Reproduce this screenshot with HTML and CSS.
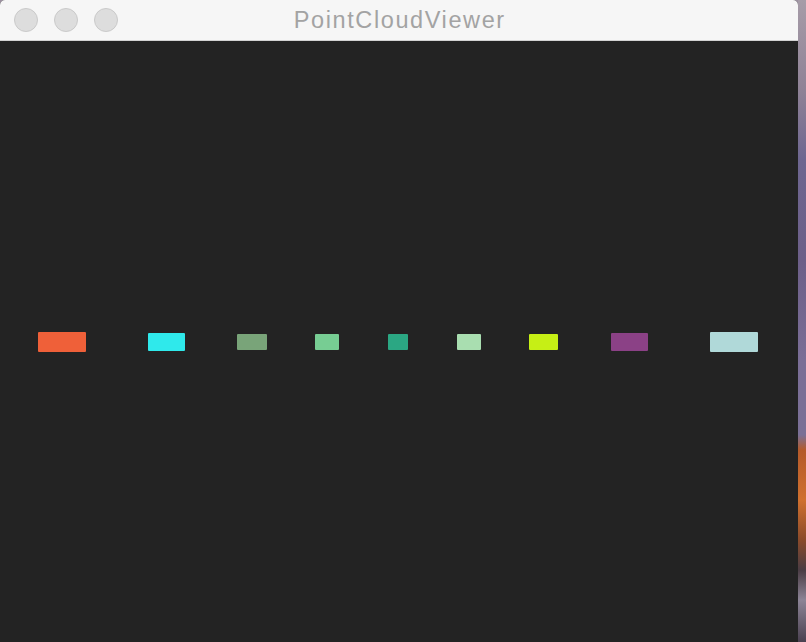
FILE: index.html
```html
<!DOCTYPE html>
<html>
<head>
<meta charset="utf-8">
<title>PointCloudViewer</title>
<link rel="stylesheet" href="styles.css">
</head>
<body>
<div class="screen">
  <div class="window">
    <div class="titlebar">
      <div class="lights">
        <span class="light"></span>
        <span class="light"></span>
        <span class="light"></span>
      </div>
      <div class="title">PointCloudViewer</div>
    </div>
    <div class="canvas">
      <div class="pt" style="left:38px;top:291px;width:48px;height:20px;background:#ef6039"></div>
      <div class="pt" style="left:148px;top:292px;width:37px;height:18px;background:#2fe9eb"></div>
      <div class="pt" style="left:237px;top:293px;width:30px;height:16px;background:#79a479"></div>
      <div class="pt" style="left:315px;top:293px;width:24px;height:16px;background:#77cd93"></div>
      <div class="pt" style="left:388px;top:293px;width:20px;height:16px;background:#2ba783"></div>
      <div class="pt" style="left:457px;top:293px;width:24px;height:16px;background:#a9deb0"></div>
      <div class="pt" style="left:529px;top:293px;width:29px;height:16px;background:#c6ef15"></div>
      <div class="pt" style="left:611px;top:292px;width:37px;height:18px;background:#8b4186"></div>
      <div class="pt" style="left:710px;top:291px;width:48px;height:20px;background:#b0d9d9"></div>
    </div>
  </div>
  <div class="desktop"></div>
</div>
</body>
</html>
```
FILE: styles.css
```css
html, body {
  margin: 0;
  padding: 0;
  width: 806px;
  height: 642px;
  overflow: hidden;
}
body {
  background: #9c90a0;
  font-family: "Liberation Sans", Arial, sans-serif;
}
.screen {
  display: flex;
  width: 806px;
  height: 642px;
}
.window {
  width: 798px;
  height: 642px;
  display: flex;
  flex-direction: column;
  border-radius: 5px 5px 0 0;
  overflow: hidden;
  background: #232323;
}
.titlebar {
  height: 40px;
  flex: none;
  background: #f6f6f6;
  border-bottom: 1px solid #d2d2d2;
  position: relative;
  display: flex;
  align-items: center;
}
.lights {
  display: flex;
  gap: 16px;
  padding-left: 14px;
}
.light {
  width: 22px;
  height: 22px;
  border-radius: 50%;
  background: #dddddd;
  border: 1px solid #cacaca;
}
.title {
  position: absolute;
  left: 0;
  right: 0;
  top: 0;
  height: 40px;
  line-height: 41px;
  text-align: center;
  font-size: 23.5px;
  letter-spacing: 1.6px;
  text-indent: 1.6px;
  color: #a3a3a3;
}
.canvas {
  flex: 1;
  position: relative;
  background: #232323;
}
.pt {
  position: absolute;
  border-radius: 1px;
}
.desktop {
  width: 8px;
  height: 642px;
  background: linear-gradient(to bottom,
    #a69ca8 0px, #8f8296 90px, #6d6690 160px, #6c5f88 260px,
    #7a6e96 360px, #7a7096 435px, #b45a2a 450px, #d0702e 500px,
    #8a4a2a 540px, #4a3c44 570px, #8c8496 600px, #4a4050 642px);
}
```
